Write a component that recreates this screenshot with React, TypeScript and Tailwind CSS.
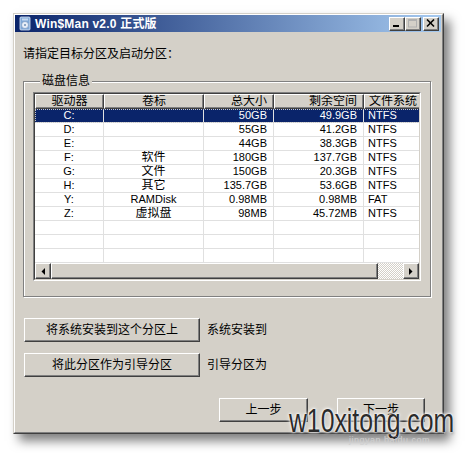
import React from "react";

const FONT = '"Liberation Sans","Noto Sans CJK SC",sans-serif';

const raised =
  "border border-t-white border-l-white border-r-[#404040] border-b-[#404040] shadow-[inset_-1px_-1px_0_#808080]";

const rows: string[][] = [
  ["C:", "", "50GB", "49.9GB", "NTFS"],
  ["D:", "", "55GB", "41.2GB", "NTFS"],
  ["E:", "", "44GB", "38.3GB", "NTFS"],
  ["F:", "软件", "180GB", "137.7GB", "NTFS"],
  ["G:", "文件", "150GB", "20.3GB", "NTFS"],
  ["H:", "其它", "135.7GB", "53.6GB", "NTFS"],
  ["Y:", "RAMDisk", "0.98MB", "0.98MB", "FAT"],
  ["Z:", "虚拟盘", "98MB", "45.72MB", "NTFS"],
];

const isCJK = (s: string) => /[\u4e00-\u9fff]/.test(s);

const align = ["justify-center", "justify-center", "justify-end pr-[6px]", "justify-end pr-[6px]", "justify-start pl-[4px]"];

function Cell({ text, i }: { text: string; i: number }) {
  return (
    <div
      className={`flex items-center border-r border-b border-[#e0e0e0] overflow-hidden whitespace-nowrap ${align[i]} ${
        isCJK(text) ? "text-[12px]" : "text-[11px]"
      } leading-[13px]`}
    >
      {text}
    </div>
  );
}

function Header({ text, i }: { text: string; i: number }) {
  const a = ["justify-center", "justify-center", "justify-end pr-[6px]", "justify-end pr-[6px]", "justify-start pl-[4px]"][i];
  return (
    <div className={`flex items-center h-[15px] bg-[#d4d0c8] text-[12px] leading-[13px] whitespace-nowrap overflow-hidden ${raised} ${a}`}>
      {text}
    </div>
  );
}

function Tri({ dir }: { dir: "l" | "r" }) {
  return (
    <svg width="4" height="7" viewBox="0 0 4 7">
      {dir === "l" ? <polygon points="4,0 4,7 0.5,3.5" fill="#000" /> : <polygon points="0,0 0,7 3.5,3.5" fill="#000" />}
    </svg>
  );
}

function TitleBtn({ kind }: { kind: "min" | "max" | "close" }) {
  return (
    <div className={`w-[16px] h-[14px] bg-[#d4d0c8] flex items-center justify-center ${raised}`}>
      <svg width="10" height="9" viewBox="0 0 10 9">
        {kind === "min" && <rect x="1" y="6" width="6" height="2" fill="#000" />}
        {kind === "max" && (
          <g fill="none" stroke="#b0b0b0">
            <rect x="0.5" y="0.5" width="8" height="7.5" />
            <line x1="0.5" y1="1.5" x2="8.5" y2="1.5" />
          </g>
        )}
        {kind === "close" && (
          <g stroke="#000" strokeWidth="1.6">
            <line x1="1" y1="0.5" x2="8" y2="7.5" />
            <line x1="8" y1="0.5" x2="1" y2="7.5" />
          </g>
        )}
      </svg>
    </div>
  );
}

export default function App() {
  const cols = ["驱动器", "卷标", "总大小", "剩余空间", "文件系统"];
  return (
    <div className="relative w-[465px] h-[453px] bg-white overflow-hidden" style={{ fontFamily: FONT }}>
      <div className="pl-[13px] pt-[13px]">
        <div className="w-[431px] bg-[#d4d0c8] border border-t-[#d4d0c8] border-l-[#d4d0c8] border-r-[#404040] border-b-[#404040] shadow-[6px_7px_10px_rgba(0,0,0,0.5)]">
          <div className="border border-t-white border-l-white border-r-[#808080] border-b-[#808080] pr-[1px]">
            {/* Title bar */}
            <div className="h-[17px] flex items-center bg-[linear-gradient(to_right,#0a246a,#a6caf0)]">
              <div className="w-[20px] flex justify-center">
                <svg width="12" height="15" viewBox="0 0 12 15">
                  <rect x="1" y="1" width="10" height="13" rx="1" fill="#7fa8d8" stroke="#dfe9f7" strokeWidth="0.8" />
                  <circle cx="6" cy="9" r="3.5" fill="#e8eef8" stroke="#6f8fb8" strokeWidth="0.6" />
                  <circle cx="6" cy="9" r="1" fill="#6f8fb8" />
                  <rect x="3" y="2.5" width="6" height="2" fill="#c6d8f0" />
                </svg>
              </div>
              <div className="text-white font-bold text-[12px] leading-[14px] whitespace-nowrap tracking-[0.2px]">Win$Man v2.0 正式版</div>
              <div className="flex-1" />
              <div className="flex items-center">
                <TitleBtn kind="min" />
                <TitleBtn kind="max" />
                <div className="w-[2px]" />
                <TitleBtn kind="close" />
              </div>
              <div className="w-[2px]" />
            </div>

            {/* Content */}
            <div className="pl-[8px] pr-[10px] pb-[10px]">
              <div className="mt-[15px] text-[12px] leading-[14px] text-black">请指定目标分区及启动分区：</div>

              <fieldset className="mt-[13px] w-[408px] border border-[#808080] shadow-[inset_1px_1px_0_#fff,1px_1px_0_#fff] px-[9px] pb-[15px]">
                <legend className="ml-[7px] px-[2px] bg-[#d4d0c8] text-[12px] leading-[14px]">磁盘信息</legend>
                <div className="mt-[4px] w-[388px] border border-t-[#808080] border-l-[#808080] border-r-white border-b-white">
                  <div className="border border-t-[#404040] border-l-[#404040] border-r-[#d4d0c8] border-b-[#d4d0c8] bg-white">
                    <div className="w-[384px] overflow-hidden">
                      <div className="w-[399px]">
                        <div className="grid grid-cols-[69px_100px_70px_90px_70px]">
                          {cols.map((c, i) => (
                            <Header key={i} text={c} i={i} />
                          ))}
                        </div>
                        {rows.map((r, ri) => (
                          <div
                            key={ri}
                            className={`grid grid-cols-[69px_100px_70px_90px_70px] h-[14px] ${
                              ri === 0 ? "bg-[#0a246a] text-white outline-1 outline-dotted outline-[#c8c8c8] -outline-offset-1" : "text-black"
                            }`}
                          >
                            {r.map((t, i) => (
                              <Cell key={i} text={t} i={i} />
                            ))}
                          </div>
                        ))}
                        {[0, 1, 2].map((k) => (
                          <div key={k} className="grid grid-cols-[69px_100px_70px_90px_70px] h-[14px]">
                            {[0, 1, 2, 3, 4].map((i) => (
                              <div key={i} className="border-r border-b border-[#e0e0e0]" />
                            ))}
                          </div>
                        ))}
                      </div>
                    </div>
                    {/* Scrollbar */}
                    <div className="flex h-[16px] w-[384px]">
                      <div className={`w-[16px] bg-[#d4d0c8] flex items-center justify-center ${raised}`}>
                        <Tri dir="l" />
                      </div>
                      <div className={`w-[327px] bg-[#d4d0c8] ${raised}`} />
                      <div className="w-[25px] bg-[repeating-conic-gradient(#ffffff_0_25%,#d4d0c8_0_50%)] bg-size-[2px_2px]" />
                      <div className={`w-[16px] bg-[#d4d0c8] flex items-center justify-center ${raised}`}>
                        <Tri dir="r" />
                      </div>
                    </div>
                  </div>
                </div>
              </fieldset>

              <div className="mt-[21px] ml-[1px] flex items-center gap-[7px]">
                <button className={`w-[176px] h-[24px] bg-[#d4d0c8] text-[12px] text-black ${raised}`}>将系统安装到这个分区上</button>
                <span className="text-[12px] text-black">系统安装到</span>
              </div>
              <div className="mt-[11px] ml-[1px] flex items-center gap-[7px]">
                <button className={`w-[176px] h-[24px] bg-[#d4d0c8] text-[12px] text-black ${raised}`}>将此分区作为引导分区</button>
                <span className="text-[12px] text-black">引导分区为</span>
              </div>

              <div className="mt-[21px] flex justify-end gap-[29px] pr-[6px]">
                <button className={`w-[89px] h-[24px] bg-[#d4d0c8] text-[12px] text-black ${raised}`}>上一步</button>
                <button className={`w-[88px] h-[24px] bg-[#d4d0c8] text-[12px] text-black ${raised}`}>下一步</button>
              </div>
            </div>
          </div>
        </div>
      </div>

      {/* Watermark */}
      <div className="absolute left-[289px] top-[404px] origin-left scale-x-75 text-[33px] leading-none text-[#2b2b2b] whitespace-nowrap [text-shadow:0_0_2px_#fff,0_0_3px_#fff,0_0_5px_#fff,1px_2px_3px_rgba(0,0,0,0.35)]" style={{ fontFamily: '"Liberation Sans",sans-serif' }}>
        w10xitong.com
      </div>
      <div className="absolute left-[349px] top-[436px] text-[9px] leading-none text-[#cfcfcf] tracking-[0.5px]">jingyan.baidu.com</div>
    </div>
  );
}
